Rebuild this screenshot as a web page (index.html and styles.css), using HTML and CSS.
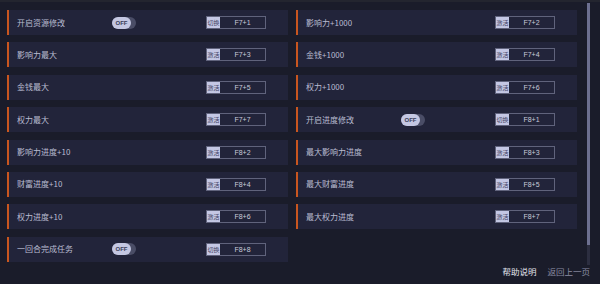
FILE: index.html
```html
<!DOCTYPE html>
<html lang="zh">
<head>
<meta charset="utf-8">
<link rel="stylesheet" href="styles.css">
</head>
<body>
<div class="app">
  <div class="main">
    <div class="grid">
      <div class="card"><span class="label">开启资源修改</span><span class="toggle"><span class="knob">OFF</span></span><span class="key"><span class="kl">切换</span><span class="kv">F7+1</span></span></div>
      <div class="card"><span class="label">影响力+1000</span><span class="key"><span class="kl">激活</span><span class="kv">F7+2</span></span></div>
      <div class="card"><span class="label">影响力最大</span><span class="key"><span class="kl">激活</span><span class="kv">F7+3</span></span></div>
      <div class="card"><span class="label">金钱+1000</span><span class="key"><span class="kl">激活</span><span class="kv">F7+4</span></span></div>
      <div class="card"><span class="label">金钱最大</span><span class="key"><span class="kl">激活</span><span class="kv">F7+5</span></span></div>
      <div class="card"><span class="label">权力+1000</span><span class="key"><span class="kl">激活</span><span class="kv">F7+6</span></span></div>
      <div class="card"><span class="label">权力最大</span><span class="key"><span class="kl">激活</span><span class="kv">F7+7</span></span></div>
      <div class="card"><span class="label">开启进度修改</span><span class="toggle"><span class="knob">OFF</span></span><span class="key"><span class="kl">切换</span><span class="kv">F8+1</span></span></div>
      <div class="card"><span class="label">影响力进度+10</span><span class="key"><span class="kl">激活</span><span class="kv">F8+2</span></span></div>
      <div class="card"><span class="label">最大影响力进度</span><span class="key"><span class="kl">激活</span><span class="kv">F8+3</span></span></div>
      <div class="card"><span class="label">财富进度+10</span><span class="key"><span class="kl">激活</span><span class="kv">F8+4</span></span></div>
      <div class="card"><span class="label">最大财富进度</span><span class="key"><span class="kl">激活</span><span class="kv">F8+5</span></span></div>
      <div class="card"><span class="label">权力进度+10</span><span class="key"><span class="kl">激活</span><span class="kv">F8+6</span></span></div>
      <div class="card"><span class="label">最大权力进度</span><span class="key"><span class="kl">激活</span><span class="kv">F8+7</span></span></div>
      <div class="card"><span class="label">一回合完成任务</span><span class="toggle"><span class="knob">OFF</span></span><span class="key"><span class="kl">切换</span><span class="kv">F8+8</span></span></div>
    </div>
    <div class="scrollbar"><div class="thumb"></div></div>
  </div>
  <div class="footer">
    <span class="help">帮助说明</span>
    <span class="back">返回上一页</span>
  </div>
</div>
</body>
</html>
```

FILE: styles.css
```css
html, body {
  margin: 0;
  padding: 0;
}
body {
  width: 600px;
  height: 284px;
  overflow: hidden;
  background: #1a1c2a;
  font-family: "Noto Sans CJK SC", "Noto Sans", sans-serif;
  color: #b8bbcf;
}
.app {
  display: flex;
  flex-direction: column;
  height: 284px;
  border-top: 2px solid #23252f;
  box-sizing: border-box;
}
.main {
  display: flex;
  align-items: flex-start;
}
.grid {
  display: grid;
  grid-template-columns: 281px 281px;
  column-gap: 8px;
  row-gap: 7.4px;
  margin-top: 8px;
  margin-left: 7px;
}
.card {
  display: flex;
  align-items: center;
  height: 25px;
  background: #22243a;
  border-left: 2px solid #c9561f;
  padding-left: 8px;
  box-sizing: border-box;
}
.label {
  width: 95px;
  font-size: 8px;
  line-height: 10px;
  white-space: nowrap;
  color: #b9bcd1;
}
.toggle {
  display: flex;
  width: 24px;
  height: 12px;
  border-radius: 6px;
  background: #4a4d66;
}
.knob {
  width: 19px;
  height: 12px;
  border-radius: 6px;
  background: #c4c7e2;
  color: #3a3d58;
  font-family: "Liberation Sans", sans-serif;
  font-size: 6px;
  font-weight: bold;
  line-height: 12px;
  text-align: center;
}
.key {
  display: flex;
  margin-left: auto;
  margin-right: 22px;
  width: 60px;
  height: 13px;
  border: 1px solid #60637c;
  box-sizing: border-box;
}
.kl {
  width: 13px;
  background: #c4c7e4;
  color: #3d4060;
  font-size: 6px;
  line-height: 11px;
  text-align: center;
  white-space: nowrap;
  overflow: hidden;
}
.kv {
  flex: 1;
  font-family: "Liberation Sans", sans-serif;
  font-size: 7px;
  line-height: 11px;
  text-align: center;
  color: #c9cbdb;
}
.scrollbar {
  margin-left: 10px;
  margin-top: 1px;
  width: 3px;
  height: 262px;
  background: #2c2e40;
}
.thumb {
  width: 3px;
  height: 242px;
  background: #6d7090;
}
.footer {
  display: flex;
  justify-content: flex-end;
  gap: 11px;
  padding-right: 10px;
  font-size: 8.5px;
  line-height: 12px;
}
.help {
  color: #e4e5ee;
}
.back {
  color: #8a8da3;
}
```
